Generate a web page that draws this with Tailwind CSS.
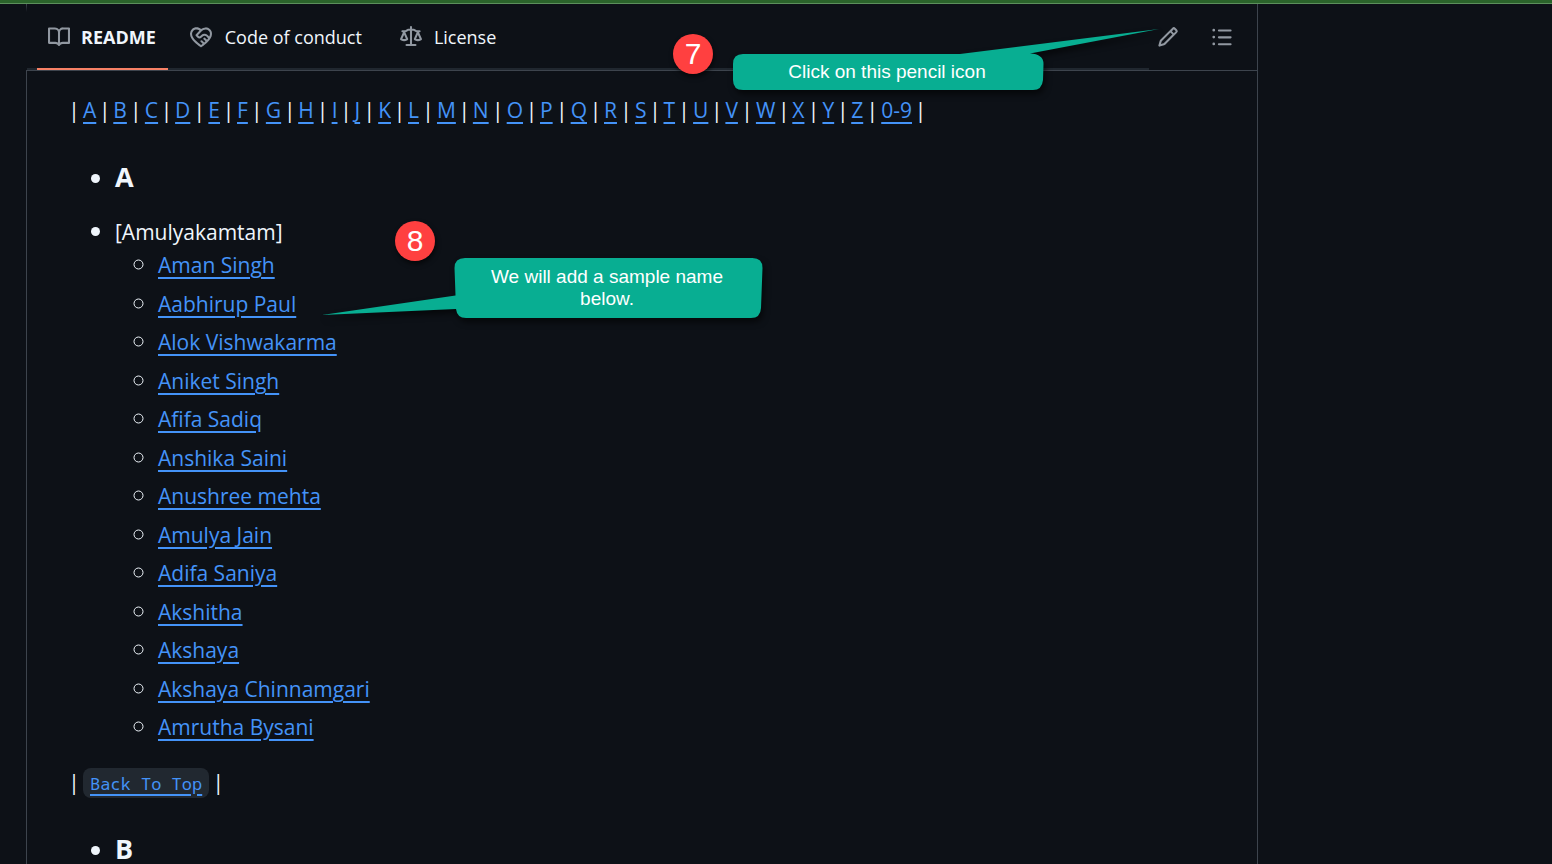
<!DOCTYPE html>
<html lang="en">
<head>
<meta charset="utf-8">
<meta name="viewport" content="width=device-width, initial-scale=1">
<title>README</title>
<script src="https://cdn.jsdelivr.net/npm/@tailwindcss/browser@4"></script>
</head>
<body class="relative h-screen overflow-hidden bg-[#0d1117] font-['Open_Sans','Noto_Sans',sans-serif] text-[#f0f6fc]">
<div class="h-1 border-b border-[#5c905c] bg-[#2b642b]"></div>
<div class="flex">
  <div class="w-[26px] shrink-0"></div>
  <main class="min-w-0 flex-1 border-r border-[#3d444d]">
    <div class="flex h-[67px] items-stretch border-b border-[#3d444d]">
      <div class="h-2 w-px shrink-0 bg-linear-to-b from-[#3d444d] to-[#0d1117]"></div>
      <nav class="flex flex-1 gap-2 pl-[10px] text-[18px] shadow-[inset_0_-2px_0_#20272f]" aria-label="Repository files">
        <a href="#readme" class="flex items-center gap-[11px] border-b-2 border-[#f78166] pt-[2px] pr-[12px] pl-[11px] font-bold">
          <svg class="size-[22px] fill-[#9198a1]" viewBox="0 0 16 16" aria-hidden="true"><path d="M0 1.75A.75.75 0 0 1 .75 1h4.253c1.227 0 2.317.59 3 1.501A3.743 3.743 0 0 1 11.006 1h4.245a.75.75 0 0 1 .75.75v10.5a.75.75 0 0 1-.75.75h-4.507a2.25 2.25 0 0 0-1.591.659l-.622.621a.75.75 0 0 1-1.06 0l-.622-.621A2.25 2.25 0 0 0 5.258 13H.75a.75.75 0 0 1-.75-.75Zm7.251 10.324.004-5.073-.002-2.253A2.25 2.25 0 0 0 5.003 2.5H1.5v9h3.757a3.75 3.75 0 0 1 1.994.574ZM8.755 4.75l-.004 7.322a3.752 3.752 0 0 1 1.992-.572H14.5v-9h-3.495a2.25 2.25 0 0 0-2.25 2.25Z"/></svg>
          <span>README</span>
        </a>
        <a href="#conduct" class="flex items-center gap-[13px] border-b-2 border-transparent px-[14px] pt-[2px]">
          <svg class="size-[22px] fill-[#9198a1]" viewBox="0 0 16 16" aria-hidden="true"><path d="M8.048 2.241c.964-.709 2.079-1.238 3.325-1.241a4.616 4.616 0 0 1 3.282 1.355c.41.408.757.86.996 1.428.238.568.348 1.206.347 1.968 0 2.193-1.505 4.254-3.081 5.862-1.496 1.526-3.213 2.796-4.249 3.563l-.22.163a.749.749 0 0 1-.895 0l-.221-.163c-1.036-.767-2.753-2.037-4.249-3.563C1.51 10.008.007 7.952.002 5.762a4.614 4.614 0 0 1 1.353-3.407C3.123.585 6.223.537 8.048 2.24Zm-1.153.983c-1.25-1.033-3.321-.967-4.48.191a3.115 3.115 0 0 0-.913 2.335c0 1.556 1.109 3.24 2.652 4.813C5.463 11.898 6.96 13.032 8 13.805c.353-.262.758-.565 1.191-.905l-1.326-1.223a.75.75 0 0 1 1.018-1.102l1.48 1.366c.328-.281.659-.577.984-.887L9.99 9.802a.75.75 0 1 1 1.019-1.103l1.384 1.28c.295-.329.566-.661.81-.995L12.92 8.7l-1.167-1.168c-.674-.671-1.78-.664-2.474.03-.268.269-.538.537-.802.797-.893.882-2.319.843-3.185-.032-.346-.35-.693-.697-1.043-1.047a.75.75 0 0 1-.04-1.016c.162-.191.336-.401.52-.623.62-.748 1.356-1.637 2.166-2.417Zm7.112 4.442c.313-.65.491-1.293.491-1.916v-.001c0-.614-.088-1.045-.23-1.385-.143-.339-.357-.633-.673-.949a3.111 3.111 0 0 0-2.218-.915c-1.092.003-2.165.627-3.226 1.602-.823.755-1.554 1.637-2.228 2.45l-.127.154.562.566a.755.755 0 0 0 1.066.02l.794-.79c1.258-1.258 3.312-1.286 4.594-.009Z"/></svg>
          <span>Code of conduct</span>
        </a>
        <a href="#license" class="flex items-center gap-[12px] border-b-2 border-transparent px-4 pt-[2px]">
          <svg class="size-[22px] fill-[#9198a1]" viewBox="0 0 16 16" aria-hidden="true"><path d="M8.75.75V2h.985c.304 0 .603.08.867.231l1.29.736c.038.022.08.033.124.033h2.234a.75.75 0 0 1 0 1.5h-.427l2.111 4.692a.75.75 0 0 1-.154.838l-.53-.53.529.531-.001.002-.002.002-.006.006-.006.005-.01.01-.045.04c-.21.176-.441.327-.686.45C14.556 10.78 13.88 11 13 11a4.498 4.498 0 0 1-2.023-.454 3.544 3.544 0 0 1-.686-.45l-.045-.04-.016-.015-.006-.006-.004-.004v-.001a.75.75 0 0 1-.154-.838L12.178 4.5h-.162c-.305 0-.604-.079-.868-.231l-1.29-.736a.245.245 0 0 0-.124-.033H8.75V13h2.5a.75.75 0 0 1 0 1.5h-6.5a.75.75 0 0 1 0-1.5h2.5V3.5h-.984a.245.245 0 0 0-.124.033l-1.289.737c-.265.15-.564.23-.869.23h-.162l2.112 4.692a.75.75 0 0 1-.154.838l-.53-.53.529.531-.001.002-.002.002-.006.006-.016.015-.045.04c-.21.176-.441.327-.686.45C4.556 10.78 3.88 11 3 11a4.498 4.498 0 0 1-2.023-.454 3.544 3.544 0 0 1-.686-.45l-.045-.04-.016-.015-.006-.006-.004-.004v-.001a.75.75 0 0 1-.154-.838L2.178 4.5H1.75a.75.75 0 0 1 0-1.5h2.234a.249.249 0 0 0 .125-.033l1.288-.737c.265-.15.564-.23.869-.23h.984V.75a.75.75 0 0 1 1.5 0Zm2.945 8.477c.285.135.718.273 1.305.273s1.02-.138 1.305-.273L13 6.327Zm-10 0c.285.135.718.273 1.305.273s1.02-.138 1.305-.273L3 6.327Z"/></svg>
          <span>License</span>
        </a>
      </nav>
      <div class="flex items-center gap-8 pr-6 pl-2">
        <button type="button" aria-label="Edit file"><svg class="size-[22px] fill-[#9198a1]" viewBox="0 0 16 16" aria-hidden="true"><path d="M11.013 1.427a1.75 1.75 0 0 1 2.474 0l1.086 1.086a1.75 1.75 0 0 1 0 2.474l-8.61 8.61c-.21.21-.47.364-.756.445l-3.251.93a.75.75 0 0 1-.927-.928l.929-3.25c.081-.286.235-.547.445-.758l8.61-8.61Zm.176 4.823L9.75 4.81l-6.286 6.287a.253.253 0 0 0-.064.108l-.558 1.953 1.953-.558a.253.253 0 0 0 .108-.064Zm1.238-3.763a.25.25 0 0 0-.354 0L10.811 3.75l1.439 1.44 1.263-1.263a.25.25 0 0 0 0-.354Z"/></svg></button>
        <button type="button" aria-label="Outline"><svg class="size-[22px] fill-[#9198a1]" viewBox="0 0 16 16" aria-hidden="true"><path d="M5.75 2.5h8.5a.75.75 0 0 1 0 1.5h-8.5a.75.75 0 0 1 0-1.5Zm0 5h8.5a.75.75 0 0 1 0 1.5h-8.5a.75.75 0 0 1 0-1.5Zm0 5h8.5a.75.75 0 0 1 0 1.5h-8.5a.75.75 0 0 1 0-1.5ZM2 14a1 1 0 1 1 0-2 1 1 0 0 1 0 2Zm1-6a1 1 0 1 1-2 0 1 1 0 0 1 2 0ZM2 4a1 1 0 1 1 0-2 1 1 0 0 1 0 2Z"/></svg></button>
      </div>
    </div>
    <article class="border-l border-[#3d444d] px-[43px] pt-[23px] text-[21px] leading-[33px] [&_a]:text-[#4493f8] [&_a]:underline [&_a]:decoration-2 [&_a]:underline-offset-4">
      <p class="flex flex-wrap gap-x-[5px] [&>span]:flex [&>span]:w-2 [&>span]:justify-center [&>span]:font-medium [&>span:nth-child(4n+3)]:w-[7px]"><span>|</span><a href="#a">A</a><span>|</span><a href="#b">B</a><span>|</span><a href="#c">C</a><span>|</span><a href="#d">D</a><span>|</span><a href="#e">E</a><span>|</span><a href="#f">F</a><span>|</span><a href="#g">G</a><span>|</span><a href="#h">H</a><span>|</span><a href="#i">I</a><span>|</span><a href="#j">J</a><span>|</span><a href="#k">K</a><span>|</span><a href="#l">L</a><span>|</span><a href="#m">M</a><span>|</span><a href="#n">N</a><span>|</span><a href="#o">O</a><span>|</span><a href="#p">P</a><span>|</span><a href="#q">Q</a><span>|</span><a href="#r">R</a><span>|</span><a href="#s">S</a><span>|</span><a href="#t">T</a><span>|</span><a href="#u">U</a><span>|</span><a href="#v">V</a><span>|</span><a href="#w">W</a><span>|</span><a href="#x">X</a><span>|</span><a href="#y">Y</a><span>|</span><a href="#z">Z</a><span>|</span><a href="#0-9">0-9</a><span>|</span></p>
      <ul class="mt-[33px] list-disc pl-[45px] leading-[31px] marker:text-[24px]">
        <li><h3 id="a" class="text-[27px] leading-[34px] font-bold">A</h3></li>
        <li class="mt-[21px]">[Amulyakamtam]
          <ul class="list-[circle] pl-[43px] [&>li:nth-child(even)]:mt-[6px] [&>li:nth-child(odd)]:mt-[5px] [&>li:nth-child(1)]:mt-0!">
            <li><a href="#aman-singh">Aman Singh</a></li>
            <li><a href="#aabhirup-paul">Aabhirup Paul</a></li>
            <li><a href="#alok-vishwakarma">Alok Vishwakarma</a></li>
            <li><a href="#aniket-singh">Aniket Singh</a></li>
            <li><a href="#afifa-sadiq">Afifa Sadiq</a></li>
            <li><a href="#anshika-saini">Anshika Saini</a></li>
            <li><a href="#anushree-mehta">Anushree mehta</a></li>
            <li><a href="#amulya-jain">Amulya Jain</a></li>
            <li><a href="#adifa-saniya">Adifa Saniya</a></li>
            <li><a href="#akshitha">Akshitha</a></li>
            <li><a href="#akshaya">Akshaya</a></li>
            <li><a href="#akshaya-chinnamgari">Akshaya Chinnamgari</a></li>
            <li><a href="#amrutha-bysani">Amrutha Bysani</a></li>
          </ul>
        </li>
      </ul>
      <p class="mt-[23px] flex items-center gap-[5px] [&>span]:flex [&>span]:w-2 [&>span]:justify-center [&>span]:font-medium"><span>|</span><a href="#top" class="rounded-lg bg-[#212830] px-[7px] leading-[28px]"><code class="font-['Noto_Sans_Mono','DejaVu_Sans_Mono',monospace] text-[17px]">Back To Top</code></a><span>|</span></p>
      <ul class="mt-[33px] list-disc pl-[45px] leading-[31px] marker:text-[24px]">
        <li><h3 id="b" class="text-[27px] leading-[34px] font-bold">B</h3></li>
      </ul>
    </article>
    <div class="h-screen border-l border-[#3d444d]"></div>
  </main>
  <div class="w-[294px] shrink-0"></div>
</div>

<!-- Tutorial annotations floating above the page -->
<svg class="pointer-events-none absolute top-0 left-0 h-[864px] w-[1552px] fill-[#08ae92] drop-shadow-[2px_4px_3px_rgba(0,0,0,0.6)]" viewBox="0 0 1552 864" aria-hidden="true">
  <path d="M743 54H960L1159 29L1030 53.500Q1043.500 54 1043.500 64L1043 80Q1042 90 1033 90H743Q733 90 733 80V64Q733 54 743 54Z"/>
  <path d="M465 258H752.500Q762.500 258 762.500 268L761 308Q760.500 318 751 318H466Q457 318 456 309L322 315L455.500 295.500L454.500 268Q454.500 258 465 258Z"/>
</svg>
<div class="absolute top-[54px] left-[733px] w-[308px] text-center font-['Liberation_Sans',Arial,sans-serif] text-[19px] leading-[36px] text-white">Click on this pencil icon</div>
<div class="absolute top-[266px] left-[455px] w-[304px] px-6 text-center font-['Liberation_Sans',Arial,sans-serif] text-[19px] leading-[22px] text-white">We will add a sample name below.</div>
<div class="absolute top-[34px] left-[673px] size-10 rounded-full bg-[#ff4040] text-center font-['Liberation_Sans',Arial,sans-serif] text-[30px] leading-10 text-white shadow-[1px_3px_5px_rgba(0,0,0,0.6)]">7</div>
<div class="absolute top-[221px] left-[395px] size-10 rounded-full bg-[#ff4040] text-center font-['Liberation_Sans',Arial,sans-serif] text-[30px] leading-10 text-white shadow-[1px_3px_5px_rgba(0,0,0,0.6)]">8</div>
</body>
</html>
